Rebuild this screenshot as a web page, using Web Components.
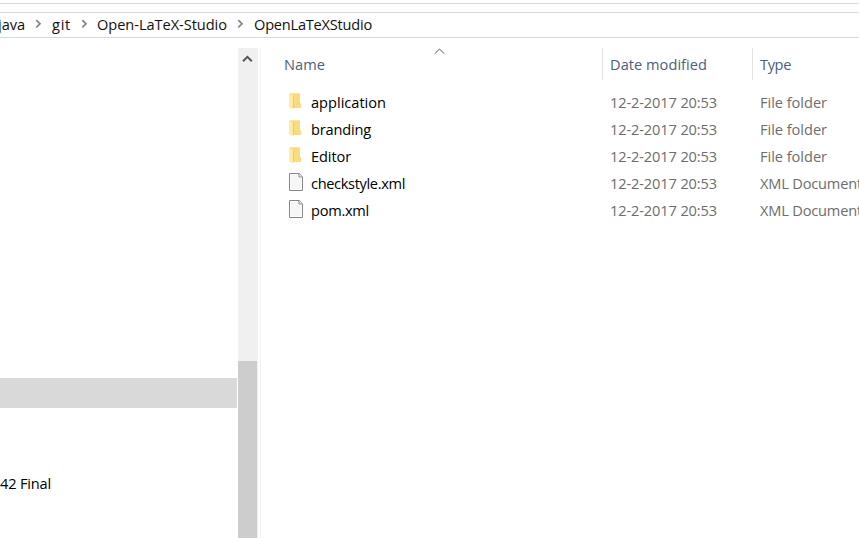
<!DOCTYPE html>
<html lang="en"><head><meta charset="utf-8"><title>OpenLaTeXStudio</title>
<style>html,body{margin:0;height:100%;overflow:hidden;background:#fff}</style></head>
<body><file-explorer></file-explorer>
<script>
const define=(name,html,cb)=>customElements.define(name,class extends HTMLElement{
  constructor(){super();const t=document.createElement('template');t.innerHTML=html;
    this.attachShadow({mode:'open'}).append(t.content.cloneNode(true));}
  connectedCallback(){if(cb)cb(this,this.shadowRoot);}
});

/* A label whose tracking is adjusted to fill its width. */
define('ui-label',`<style>:host{display:block;white-space:nowrap;line-height:20px;height:20px;flex:none}span{display:inline-block}</style><span></span>`,(h,r)=>{
  const s=r.querySelector('span'),w=+h.getAttribute('w'),t=h.getAttribute('text');
  s.textContent=t;h.style.width=w+'px';
  s.style.letterSpacing=((w-s.getBoundingClientRect().width)/t.length)+'px';
});
define('crumb-arrow',`<style>:host{display:block;width:7px;height:10px;flex:none}svg{display:block}</style>
<svg width="7" height="10" viewBox="0 0 7 10"><path d="M1.3 1.2 5 4.8 1.3 8.4" fill="none" stroke="#858585" stroke-width="1.7"/></svg>`);
define('address-bar',`<style>
:host{display:block;height:38px;box-sizing:border-box;padding-top:3px;color:#111}
.gap{height:8px;border-top:1px solid #d9d9d9}
.bar{height:24px;border:solid #d9d9d9;border-width:1px 0;display:flex;align-items:flex-start}
ui-label{margin-top:1px}crumb-arrow{margin-top:6px}
</style><div class="gap"></div><div class="bar">
<ui-label text="java" w="27" style="margin-left:-2px"></ui-label><crumb-arrow style="margin-left:10px"></crumb-arrow>
<ui-label text="git" w="19" style="margin-left:10px"></ui-label><crumb-arrow style="margin-left:10px"></crumb-arrow>
<ui-label text="Open-LaTeX-Studio" w="130" style="margin-left:9px"></ui-label><crumb-arrow style="margin-left:10px"></crumb-arrow>
<ui-label text="OpenLaTeXStudio" w="118" style="margin-left:10px"></ui-label></div>`);
define('nav-pane',`<style>
:host{display:block;width:237px;height:490px;color:#000}
.selected{margin-top:330px;height:30px;background:#d9d9d9}
ui-label{margin-top:65px}
</style><div class="selected"></div><ui-label text="42 Final" w="51"></ui-label>`);
define('scroll-bar',`<style>
:host{display:block;width:20px;height:490px;margin-left:1px;background:#f0f0f0}
.up{height:313px}.thumb{width:19px;height:177px;background:#cdcdcd}svg{display:block}
</style><div class="up"><svg width="20" height="20"><path d="M5 13.2 9.4 8.8 13.8 13.2" fill="none" stroke="#555" stroke-width="2"/></svg></div><div class="thumb"></div>`);
define('item-icon',`<style>:host{display:block;width:16px;height:18px;flex:none}svg{display:block}</style>
<svg class="folder" width="16" height="18"><path d="M2 1.2H12V11L13 11.8V16H2Z" fill="#f9db80"/><path d="M4.8 3.2H6V15.8L4.8 17Z" fill="#efcb6c"/><path d="M1 1.4 4.8 3.6V17.6L1 15.6Z" fill="#ffeaa6"/></svg>
<svg class="file" width="16" height="18"><path d="M1.5.5H11.2L14.5 3.8V17.5H1.5Z" fill="#fff" stroke="#858585"/><path d="M3 2H10V5H13V16H3Z" fill="#f6f6f6"/><path d="M10.9.7V4H14.3" fill="#e8e8e8" stroke="#858585" stroke-width=".9"/></svg>`,(h,r)=>{
  r.querySelector('.'+(h.getAttribute('kind')==='file'?'folder':'file')).remove();
});
define('file-row',`<style>:host{display:grid;grid-template-columns:23px 299px 150px auto;height:27px;color:#6d6d6d}
.name{color:#000}</style><item-icon></item-icon><ui-label class="name"></ui-label><ui-label text="12-2-2017 20:53" w="107"></ui-label><ui-label class="type"></ui-label>`);
define('column-head',`<style>
:host{display:grid;grid-template-columns:318px 150px 1fr;height:32px;color:#4c607a}
div{box-sizing:border-box;padding:6px 0 0 7px;border-left:1px solid #e2e2e2}
.name{border:0;padding-left:0;display:flex}
svg{margin:-6px 0 0 109px}
</style><div class="name"><ui-label text="Name" w="41"></ui-label><svg width="12" height="8"><path d="M.8 5.7 5.5 1 10.2 5.7" fill="none" stroke="#555" stroke-width="1"/></svg></div>
<div><ui-label text="Date modified" w="97"></ui-label></div><div><ui-label text="Type" w="31"></ui-label></div>`);
define('file-list',`<style>
:host{display:block;margin-left:2px;border-left:1px solid #f3f3f3;padding-left:23px;overflow:hidden;min-width:0;box-sizing:border-box;height:490px}
.rows{padding:12px 0 0 4px}
</style><column-head></column-head><div class="rows"></div>`,(h,r)=>{
  const rows=r.querySelector('.rows');
  for(const [n,w,k] of [['application',75,'folder'],['branding',60,'folder'],['Editor',40,'folder'],['checkstyle.xml',94,'file'],['pom.xml',58,'file']]){
    const e=document.createElement('file-row'),q=e.shadowRoot;
    q.querySelector('item-icon').setAttribute('kind',k);
    const a=q.querySelector('.name'),b=q.querySelector('.type');
    a.setAttribute('text',n);a.setAttribute('w',w);
    b.setAttribute('text',k==='file'?'XML Document':'File folder');b.setAttribute('w',k==='file'?102:67);
    rows.append(e);
  }
});
define('file-explorer',`<style>
:host{display:block;width:859px;height:538px;overflow:hidden;background:#fff;font:14.6px "Open Sans","Noto Sans",sans-serif}
.panes{display:grid;grid-template-columns:237px 21px 1fr;padding-top:10px}
</style><address-bar></address-bar><div class="panes"><nav-pane></nav-pane><scroll-bar></scroll-bar><file-list></file-list></div>`);
</script></body></html>
